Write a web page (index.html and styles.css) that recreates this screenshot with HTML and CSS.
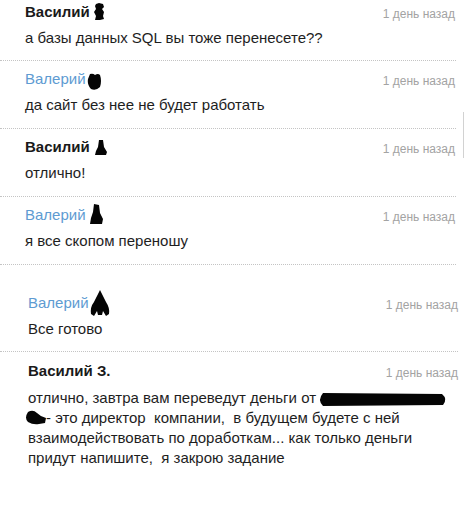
FILE: index.html
```html
<!DOCTYPE html>
<html lang="ru">
<head>
<meta charset="utf-8">
<title>Комментарии</title>
<link rel="stylesheet" href="styles.css">
</head>
<body>
<div class="page">
  <div class="edge"></div>
  <ul class="comments">
    <li class="comment comment--first">
      <div class="head">
        <span class="who">
          <span class="name">Василий</span>
          <svg class="blob blob-1" width="11" height="17" viewBox="0 0 11 17"><path d="M2 1 L5 0 L9 1 L10 4 L8 6 L10 9 L9 13 L10 16 L6 17 L1 17 L2 13 L0 9 L2 6 L1 3 Z"/></svg>
        </span>
        <span class="date">1 день назад</span>
      </div>
      <p class="msg">а базы данных SQL вы тоже перенесете??</p>
    </li>
    <li class="comment">
      <div class="head">
        <span class="who">
          <span class="name name--blue">Валерий</span>
          <svg class="blob blob-2" width="15" height="17" viewBox="0 0 15 17"><path d="M3 1 Q6 0 8 2 Q11 0 13 2 Q15 8 13 14 Q9 18 4 16 Q0 12 1 6 Z"/></svg>
        </span>
        <span class="date">1 день назад</span>
      </div>
      <p class="msg">да сайт без нее не будет работать</p>
    </li>
    <li class="comment">
      <div class="head">
        <span class="who">
          <span class="name">Василий</span>
          <svg class="blob blob-3" width="12" height="15" viewBox="0 0 12 15"><path d="M4 0 L8 0 L9 7 L12 12 L11 15 L0 15 L1 11 L3 7 Z"/></svg>
        </span>
        <span class="date">1 день назад</span>
      </div>
      <p class="msg">отлично!</p>
    </li>
    <li class="comment">
      <div class="head">
        <span class="who">
          <span class="name name--blue">Валерий</span>
          <svg class="blob blob-4" width="13" height="20" viewBox="0 0 13 20"><path d="M4 0 L9 1 L10 9 L13 15 L12 20 L0 20 L1 14 L3 8 Z"/></svg>
        </span>
        <span class="date">1 день назад</span>
      </div>
      <p class="msg">я все скопом переношу</p>
    </li>
    <li class="comment comment--wide comment--tall">
      <div class="head">
        <span class="who">
          <span class="name name--blue">Валерий</span>
          <svg class="blob blob-5" width="20" height="26" viewBox="0 0 20 26"><path d="M10 0 Q13 6 16 12 Q20 18 19 24 L16 26 L13 21 L12 25 L8 25 L7 21 L4 26 L1 24 Q0 17 4 12 Q7 6 10 0 Z"/></svg>
        </span>
        <span class="date">1 день назад</span>
      </div>
      <p class="msg">Все готово</p>
    </li>
    <li class="comment comment--wide comment--last">
      <div class="head">
        <span class="who">
          <span class="name">Василий З.</span>
        </span>
        <span class="date">1 день назад</span>
      </div>
      <p class="msg msg--long">
        <span class="line">отлично, завтра вам переведут деньги от<svg class="blob blob-long" width="131" height="15" viewBox="0 0 131 15"><path d="M6 1 L125 2 Q131 7 126 13 L6 14 Q0 8 6 1 Z"/></svg></span>
        <span class="line"><svg class="blob blob-6" width="21" height="15" viewBox="0 0 21 15"><path d="M3 2 Q8 -1 12 3 Q16 7 21 8 L20 13 L14 14 Q8 15 3 12 Q-1 8 3 2 Z"/></svg>- это директор  компании,  в будущем будете с ней</span>
        <span class="line">взаимодействовать по доработкам... как только деньги</span>
        <span class="line">придут напишите,  я закрою задание</span>
      </p>
    </li>
  </ul>
</div>
</body>
</html>
```

FILE: styles.css
```css
html, body {
  margin: 0;
  padding: 0;
  background: #ffffff;
}

body {
  font-family: "Liberation Sans", Arial, sans-serif;
  color: #222222;
}

.page {
  position: relative;
  width: 476px;
  height: 505px;
  overflow: hidden;
}

.edge {
  position: absolute;
  left: 463px;
  top: 112px;
  width: 1px;
  height: 46px;
  background: #d2d2d2;
}

.comments {
  list-style: none;
  margin: 0;
  padding: 0;
  width: 456px;
}

.comment {
  padding: 10px 1px 15px 25px;
  border-bottom: 1px dotted #c4c4c4;
}

.comment--first {
  padding-top: 4px;
  padding-bottom: 14px;
}

.comment--wide {
  width: 430px;
  padding-left: 28px;
  padding-right: 0;
}

.comment--tall {
  padding-top: 30px;
  padding-bottom: 14px;
}

.comment--last {
  border-bottom: none;
  padding-top: 11px;
}

.head {
  display: flex;
  justify-content: space-between;
  align-items: flex-start;
  height: 16px;
  line-height: 16px;
}

.who {
  display: flex;
  align-items: flex-start;
}

.name {
  font-size: 15px;
  font-weight: bold;
  color: #1a1a1a;
}

.name--blue {
  font-weight: normal;
  color: #5e9bd2;
}

.date {
  font-size: 12px;
  color: #a3a3a3;
  padding-top: 2px;
}

.blob {
  display: block;
  fill: #050505;
  flex: none;
}

.blob-1 { margin: -1px 0 0 4px; }
.blob-2 { margin: 2px 0 0 1px; }
.blob-3 { margin: 1px 0 0 5px; }
.blob-4 { margin: -3px 0 0 4px; }
.blob-5 { margin: -5px 0 0 1px; }

.msg {
  margin: 10px 0 0;
  font-size: 15px;
  line-height: 16px;
  color: #1e1e1e;
}

.msg--long {
  margin-top: 9px;
  line-height: 20px;
}

.line {
  display: flex;
  align-items: center;
  white-space: pre;
  height: 20px;
}

.blob-long {
  display: inline-block;
  margin-left: 1px;
  margin-top: 2px;
}

.blob-6 {
  display: inline-block;
  margin-left: -3px;
  margin-top: -2px;
}
```
